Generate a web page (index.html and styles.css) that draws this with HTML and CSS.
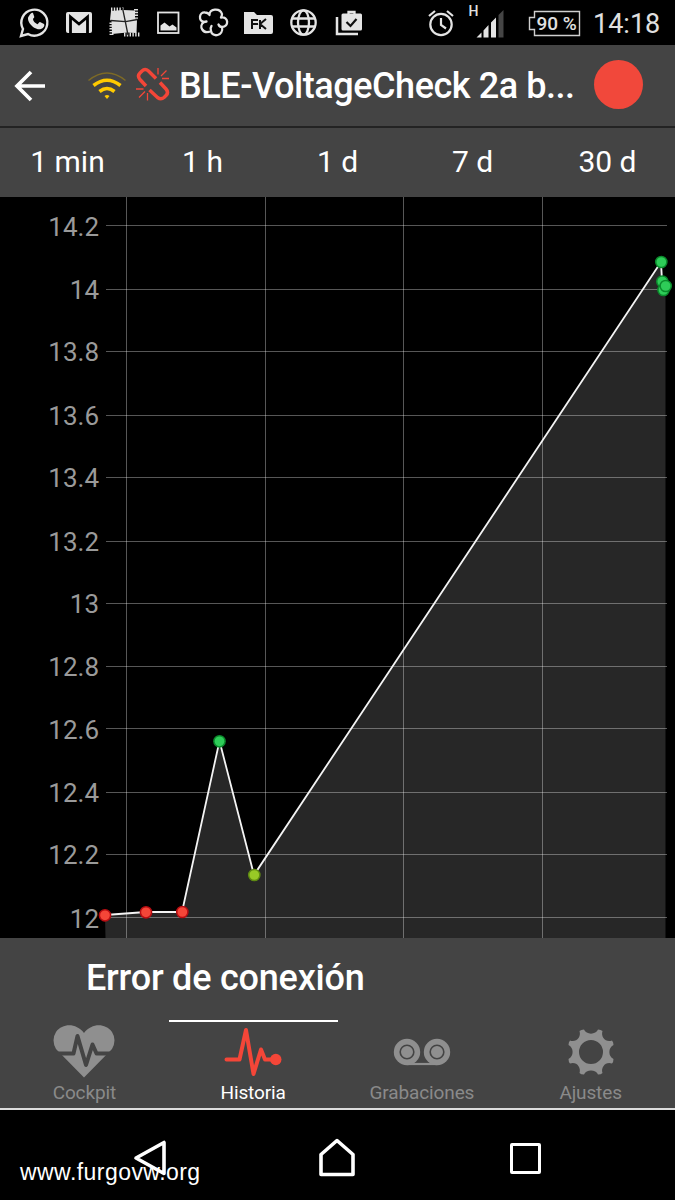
FILE: index.html
```html
<!DOCTYPE html>
<html lang="es">
<head>
<meta charset="utf-8">
<title>BLE-VoltageCheck</title>
<link rel="stylesheet" href="styles.css">
</head>
<body>
<div class="screen">
  <div class="status">
    <div class="notifications">
      <svg viewBox="0 0 45 45"><path d="M10 36l2-7a13 13 0 1 1 5 5z" fill="none" stroke="#e4e4e4" stroke-width="2.4"/><path d="M18 16c-4 4 5 15 12 13 3-1 4-4 3-5l-4-2c-1 0-2 3-3 2-2-1-4-3-4-5 0-1 2-1 1-3l-1-3c-1-1-3 1-4 3z" fill="#e4e4e4"/></svg>
      <svg viewBox="0 0 45 45"><rect x="10" y="12" width="26" height="21" rx="2" fill="#e4e4e4"/><path d="M14.500 33V17L23 24l8.500-7v16" fill="none" stroke="#000" stroke-width="2.800"/></svg>
      <svg viewBox="0 0 45 45"><path d="M10 11l12-1 12 0.500 0 8 2 1.500-0.500 13-9.500-0.500-15 1.500-0.500-13-1.500-1z" fill="#e0e0e0"/><path d="M10 9.500H24M35 9V20M10.500 22.500V35M23 34.500H39" fill="none" stroke="#e0e0e0" stroke-width="4" stroke-dasharray="1.400 1.400"/><path d="M21.500 8l2.500 12 3 15M9.500 20.500l15 1.200 12-2.200" stroke="#222" stroke-width="1.300" fill="none"/></svg>
      <svg viewBox="0 0 45 45"><rect x="12" y="12.500" width="20.500" height="20.500" fill="none" stroke="#e4e4e4" stroke-width="1.800"/><path d="M14.500 30.500v-5l4-3 5 4 3-2 4 3v3z" fill="#e4e4e4"/></svg>
      <svg viewBox="0 0 45 45"><path d="M13 22C7 21 8 12 14 12.500Q17 12.500 18.500 15C18 8.500 29 7.500 31 14Q31 16 30 17.500C37.500 16 38.500 27 31 27C33 36 21 38 20 31C12 35 7 26 13 22L15.500 21.500M20 31Q19 28 20.500 26M31 27Q28.500 27 27.500 24.500" fill="none" stroke="#e4e4e4" stroke-width="2.300" stroke-linejoin="round" stroke-linecap="round"/></svg>
      <svg viewBox="0 0 45 45"><path d="M8 12h10l3 3h14q2 0 2 2v15q0 2-2 2H8z" fill="#e4e4e4"/><path d="M16 29v-9h6M16 24h6M24 20v9M30 19l-6 5 6 5" fill="none" stroke="#111" stroke-width="2"/></svg>
      <svg viewBox="0 0 45 45"><g fill="none" stroke="#e4e4e4" stroke-width="2.300"><circle cx="22.500" cy="22.500" r="12.200"/><ellipse cx="22.500" cy="22.500" rx="5.500" ry="12.200"/><path d="M11 18.500h23M11 26.500h23"/></g></svg>
      <svg viewBox="0 0 45 45"><path d="M11 17v17h21" fill="none" stroke="#e4e4e4" stroke-width="2.500"/><path d="M22.500 15v-3h6v3" fill="none" stroke="#e4e4e4" stroke-width="2.300"/><rect x="15.500" y="13.500" width="20.500" height="17" rx="1.500" fill="#e4e4e4"/><path d="M20.500 22l4 4 6-7" fill="none" stroke="#111" stroke-width="2.200"/></svg>
    </div>
    <svg class="alarm" viewBox="0 0 30 30"><g fill="none" stroke="#e4e4e4" stroke-width="2.200"><circle cx="15" cy="16.500" r="10.700"/><path d="M15 10v7l5 3.500M3 8l6-5M27 8l-6-5"/></g></svg>
    <div class="signal">
      <span class="network">H</span>
      <svg viewBox="0 0 30 30"><path d="M1.500 29.500L6.500 24.500V29.500zM8.500 22.500L13.500 17V29.500H8.500zM16 14.500L21 9.500V29.500H16z" fill="#e4e4e4"/><path d="M23.500 7L28.500 2V29.500H23.500z" fill="#454545"/></svg>
    </div>
    <div class="battery">
      <svg viewBox="0 0 53 28"><path d="M1.500 8.500h5v-6h45v24h-45v-6h-5z" fill="none" stroke="#cfcfcf" stroke-width="1.400"/></svg>
      <span>90 %</span>
    </div>
    <span class="clock">14:18</span>
  </div>

  <div class="header">
    <svg class="back" viewBox="0 0 32 32"><path d="M31 16H3M17 2L3 16l14 14" fill="none" stroke="#fff" stroke-width="3.700"/></svg>
    <svg class="wifi" viewBox="0 0 40 30"><g fill="none" stroke="#ffca00"><path d="M1.500 9.500Q20-5.500 38.500 9.500" stroke="#7d6a26" stroke-width="1.500"/><path d="M6.500 14.500Q20 4 33.500 14.500" stroke-width="3.600"/><path d="M12.500 20.500Q20 14.500 27.500 20.500" stroke-width="3.600"/></g><path d="M17.500 25Q20 23 22.500 25L20 28z" fill="#ffca00"/></svg>
    <svg class="unlink" viewBox="0 0 34 34"><g fill="none" stroke="#f44638" stroke-width="3.500"><path d="M10 19L4 12.500Q1 9 4 6L6 4Q9 1 12.500 4L20 11.500"/><path d="M24 15.500L30 22Q33 25.500 30 28.500L28 30.500Q25 33 21.500 30.500L13.500 23"/></g><path d="M22 7.500V1M25 9L30.500 3.500M26 11.500H33M7.500 22H0M9 24.500L3 30.500M11.500 26V33.500" stroke="#f44638" stroke-width="1.300"/></svg>
    <h1>BLE-VoltageCheck 2a b...</h1>
    <span class="record"></span>
  </div>

  <div class="ranges"><span>1 min</span><span>1 h</span><span>1 d</span><span>7 d</span><span>30 d</span></div>

  <svg class="chart" viewBox="0 197 675 741">
    <path d="M105 915L146 912 182 912 219.500 741 254 875 661 262 665.500 290V938H105.500z" fill="#272727"/>
    <path class="grid" d="M106 225.500H667M106 289.500H667M106 351.500H667M106 415.500H667M106 477.500H667M106 541.500H667M106 603.500H667M106 666.500H667M106 728.500H667M106 792.500H667M106 854.500H667M106 917.500H667M126.500 197V938M265.500 197V938M403.500 197V938M542.500 197V938"/>
    <g class="labels">
      <text x="99" y="236">14.2</text><text x="99" y="299">14</text><text x="99" y="361">13.8</text><text x="99" y="425">13.6</text><text x="99" y="487">13.4</text><text x="99" y="550.500">13.2</text><text x="99" y="613">13</text><text x="99" y="676">12.8</text><text x="99" y="738.500">12.6</text><text x="99" y="802">12.4</text><text x="99" y="864">12.2</text><text x="99" y="927.500">12</text>
    </g>
    <path d="M105 915L146 912 182 912 219.500 741 254 875 661 262 662 282 663.500 290 666 286" fill="none" stroke="#f4f4f4" stroke-width="1.800"/>
    <g fill="#f44638" stroke="#b80d12" stroke-width="1.500"><circle cx="105" cy="915.300" r="5.600"/><circle cx="146" cy="912.300" r="5.600"/><circle cx="182.300" cy="912" r="5.600"/></g>
    <circle cx="254.300" cy="875" r="5.600" fill="#98c926" stroke="#5f8a12" stroke-width="1.500"/>
    <g fill="#2ecc58" stroke="#0b8a2c" stroke-width="1.500"><circle cx="219.500" cy="741.300" r="5.600"/><circle cx="661.300" cy="262" r="5.600"/><circle cx="662.300" cy="281.500" r="5.600"/><circle cx="663.500" cy="290" r="5.600"/><circle cx="665.700" cy="286" r="5.600"/></g>
  </svg>

  <div class="message">Error de conexión</div>

  <div class="tabs">
    <div class="tab">
      <svg viewBox="0 0 64 56"><path d="M32 54.500L4 26Q-1 17 4 9C11 0 24 0 32 10 40 0 53 0 60 9Q65 17 60 26z" fill="#8f8f8f"/><path d="M0 30.500H21.500L25.500 13 34 42 40.500 21.500 44.500 30.500H64" fill="none" stroke="#444" stroke-width="4" stroke-linejoin="round"/></svg>
      <span>Cockpit</span>
    </div>
    <div class="tab active">
      <svg viewBox="0 0 64 56"><path d="M5.500 36.500H18.500L25 7 32.500 51 40 26.500 44 36.500H55" fill="none" stroke="#f44638" stroke-width="4" stroke-linejoin="round" stroke-linecap="round"/><circle cx="54.800" cy="36.500" r="5.700" fill="#f44638"/></svg>
      <span>Historia</span>
    </div>
    <div class="tab">
      <svg viewBox="0 0 64 56"><path d="M17 41H47" stroke="#8f8f8f" stroke-width="2.200"/><g fill="#8f8f8f"><circle cx="17" cy="29" r="13.200"/><circle cx="47" cy="29" r="13.200"/></g><g fill="#8f8f8f" stroke="#444" stroke-width="1.600"><circle cx="17" cy="29" r="6.800"/><circle cx="47" cy="29" r="6.800"/></g></svg>
      <span>Grabaciones</span>
    </div>
    <div class="tab">
      <svg viewBox="0 0 64 56"><path fill="#8f8f8f" fill-rule="evenodd" d="M20.500 8Q22 6.500 25 6.500C27 12 37 12 39 6.500Q42 6.500 43.500 8C41.500 14 47 20 53 17.500Q54.500 19 54.500 22C49 24.500 49 33.500 54.500 36Q54.500 39 53 40.500C47 38 41.500 44 43.500 50Q42 51.500 39 51.500C37 46 27 46 25 51.500Q22 51.500 20.500 50C22.500 44 17 38 11 40.500Q9.500 39 9.500 36C15 33.500 15 24.500 9.500 22Q9.500 19 11 17.500C17 20 22.500 14 20.500 8zM32 17a12 12 0 1 0 0 24 12 12 0 0 0 0-24z"/></svg>
      <span>Ajustes</span>
    </div>
  </div>

  <div class="navbar">
    <svg class="key-back" viewBox="0 0 36 40"><path d="M31 4.500V35.500L3 20z" fill="none" stroke="#fff" stroke-width="3.600" stroke-linejoin="round"/></svg>
    <svg class="key-home" viewBox="0 0 40 40"><path d="M4 36.500V16.500L20 2.500 36 16.500V36.500z" fill="none" stroke="#fff" stroke-width="3.600" stroke-linejoin="round"/></svg>
    <span class="key-recent"></span>
    <span class="watermark">www.furgovw.org</span>
  </div>
</div>
</body>
</html>
```
FILE: styles.css
```css
body { margin: 0; background: #000; }
.screen { width: 675px; height: 1200px; overflow: hidden; display: flex; flex-direction: column; background: #000; color: #fff; font-family: Roboto, "Liberation Sans", sans-serif; }
.screen svg { display: block; flex: none; }
.status { height: 45px; flex: none; display: flex; align-items: center; color: #e0e0e0; }
.notifications { display: flex; margin-left: 10.500px; }
.notifications svg { width: 45px; height: 45px; }
.alarm { width: 30px; height: 30px; margin-left: 55px; }
.signal { display: flex; align-items: flex-start; width: 46px; height: 36px; margin-left: 13px; }
.signal svg { width: 30px; height: 30px; margin: 3.500px 0 0 -4px; }
.network { font: 500 14px/14px Roboto, sans-serif; width: 10px; padding-top: 0; margin-top: -1px; }
.battery { display: grid; width: 53px; height: 28px; margin-left: 13px; }
.battery svg, .battery span { grid-area: 1 / 1; }
.battery svg { width: 53px; height: 28px; }
.battery span { font: 500 19px/29px Roboto, sans-serif; padding-left: 9px; white-space: nowrap; }
.clock { font-size: 27px; line-height: 45px; margin-left: 12.500px; padding-top: 3px; }
.header { height: 81px; flex: none; display: flex; align-items: center; background: #444; border-bottom: 2px solid #232323; }
.back { width: 32px; height: 32px; margin-left: 14px; padding-top: 1px; }
.wifi { width: 40px; height: 30px; margin-left: 41px; }
.unlink { width: 34px; height: 34px; margin-left: 9px; margin-bottom: 3px; }
h1 { margin: 0 0 0 9px; width: 415px; font-size: 36px; line-height: 80px; font-weight: 500; letter-spacing: -.44px; white-space: nowrap; }
.record { width: 49px; height: 49px; border-radius: 50%; background: #f1483b; margin-top: -2px; }
.ranges { height: 69px; flex: none; display: grid; grid-template-columns: repeat(5, 1fr); background: #444; text-align: center; font-size: 30px; line-height: 67px; }
.chart { width: 675px; height: 741px; }
.grid { fill: none; stroke: #fff; stroke-opacity: .34; stroke-width: 1; }
.labels text { font-size: 26px; fill: #9a9a9a; text-anchor: end; }
.message { height: 82px; flex: none; background: #444; box-sizing: border-box; padding-left: 86px; font-size: 36px; line-height: 81px; font-weight: 500; letter-spacing: -.22px; }
.tabs { height: 88px; flex: none; display: grid; grid-template-columns: repeat(4, 1fr); background: #444; border-bottom: 2px solid #dcdcdc; }
.tab { display: flex; flex-direction: column; align-items: center; border-top: 2px solid transparent; color: #8a8a8a; font-size: 19px; line-height: 24px; letter-spacing: -.12px; }
.tab svg { width: 64px; height: 56px; margin-top: 1px; margin-bottom: 2px; }
.tab.active { border-color: #fff; color: #fff; }
.navbar { height: 90px; flex: none; display: flex; align-items: center; position: relative; padding-top: 5px; box-sizing: border-box; }
.key-back { width: 36px; height: 40px; margin-left: 133px; }
.key-home { width: 40px; height: 40px; margin-left: 148px; }
.key-recent { width: 31px; height: 31px; box-sizing: border-box; border: 3.500px solid #fff; border-radius: 2px; margin-left: 153px; margin-top: 1px; }
.watermark { position: absolute; left: 20px; bottom: 14px; font: 23px/28px "Liberation Sans", sans-serif; letter-spacing: .45px; }
```
